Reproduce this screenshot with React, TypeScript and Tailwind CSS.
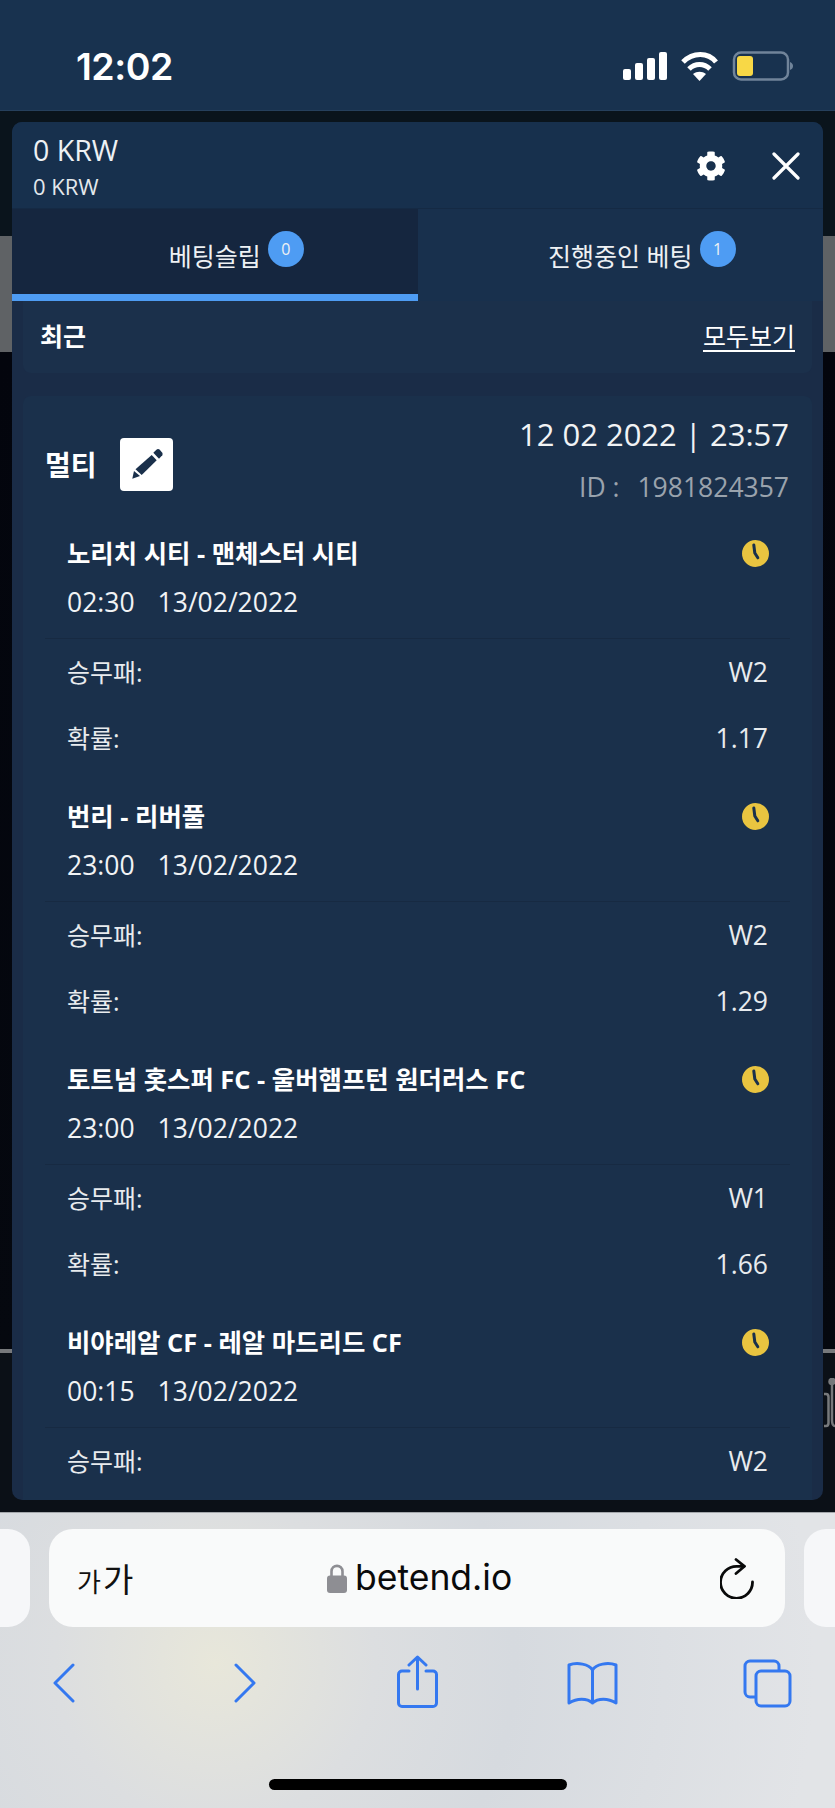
const bets = [
  { teams: "노리치 시티 - 맨체스터 시티", time: "02:30", pick: "W2", odds: "1.17" },
  { teams: "번리 - 리버풀", time: "23:00", pick: "W2", odds: "1.29" },
  { teams: "토트넘 홋스퍼 FC - 울버햄프턴 원더러스 FC", time: "23:00", pick: "W1", odds: "1.66" },
  { teams: "비야레알 CF - 레알 마드리드 CF", time: "00:15", pick: "W2", odds: "" },
];

function StatusBar() {
  return (
    <div className="flex h-[111px] items-start border-b border-[#26405c] bg-[#18324f] pl-[76px] pt-[52px] text-white">
      <span className="mt-[1px] w-[547px] font-['Inter',sans-serif] text-[37.5px] leading-[27px] font-semibold tracking-[-0.5px]">12:02</span>
      <svg width="170" height="30" viewBox="0 0 170 30" className="-mt-[1px]">
        <g fill="#fff">
          <rect x="0" y="18" width="8" height="11" rx="2" />
          <rect x="12" y="12" width="8" height="17" rx="2" />
          <rect x="24" y="7" width="8" height="22" rx="2" />
          <rect x="36" y="1" width="8" height="28" rx="2" />
        </g>
        <g fill="none" stroke="#fff" strokeWidth="5">
          <path d="M60 11 C70 1 85 1 93 11" />
          <path d="M66 18 C72 12 81 12 87 18" />
        </g>
        <path d="M70 23 C74 20 79 20 83 23 L76.5 30 Z" fill="#fff" />
        <rect x="111" y="1.5" width="54" height="27" rx="7" fill="none" stroke="#70849a" strokeWidth="2.5" />
        <rect x="114" y="5" width="16" height="20" rx="3" fill="#f8d846" />
        <path d="M167 11 C169 12 170 13 170 15 C170 17 169 18 167 19 Z" fill="#70849a" />
      </svg>
    </div>
  );
}

function ClockIcon() {
  return (
    <svg width="27" height="27" viewBox="0 0 27 27" className="-mr-[1px]">
      <circle cx="13.5" cy="13.5" r="13.5" fill="#e9c440" />
      <path d="M11.8 5 L12.8 13 L15.8 17.8" fill="none" stroke="#1a304b" strokeWidth="3" strokeLinecap="round" strokeLinejoin="round" />
    </svg>
  );
}

function BetRow({ teams, time, pick, odds }: (typeof bets)[number]) {
  return (
    <div className="pb-[17px]">
      <div className="flex h-[54px] items-center justify-between pl-[44px] pr-[44px]">
        <span className="text-[25.4px] font-bold text-white">{teams}</span>
        <ClockIcon />
      </div>
      <div className="flex h-[46px] items-center gap-[23px] pl-[44px] text-[26.5px] text-[#f1f3f5]">
        <span>{time}</span>
        <span>13/02/2022</span>
      </div>
      <div className="mx-[22px] mt-[12px] h-px bg-[#172a42]" />
      <div className="flex h-[67px] items-center justify-between pl-[44px] pr-[44px] text-[25px] text-[#e8ebee]">
        <span>승무패:</span>
        <span className="text-[26.5px]">{pick}</span>
      </div>
      {odds && (
        <div className="flex h-[66px] items-center justify-between pl-[44px] pr-[44px] text-[25px] text-[#e8ebee]">
          <span>확률:</span>
          <span className="text-[26.5px]">{odds}</span>
        </div>
      )}
    </div>
  );
}

function TabLabel({ label, count }: { label: string; count: number }) {
  return (
    <span className="relative text-[25px] leading-[40px] text-[#eef1f4]">
      {label}
      <span className="absolute -top-[5px] left-full ml-[7px] flex h-[36px] w-[36px] items-center justify-center rounded-full bg-[#4e9cf3] text-[16px] leading-none">
        {count}
      </span>
    </span>
  );
}

function Panel() {
  return (
    <div className="h-[1378px] overflow-hidden rounded-[10px] bg-[#1a2c47] font-['Open_Sans','Noto_Sans_CJK_KR',sans-serif] text-white">
      {/* header */}
      <div className="flex h-[87px] items-center justify-between border-b border-[#152a44] bg-[#17304d] pl-[21px] pr-[23px]">
        <div className="pt-[3px]">
          <div className="text-[28.5px] leading-[36px] text-[#eef1f4]">0 KRW</div>
          <div className="mt-[3px] text-[22px] leading-[30px] text-[#e4e8ec]">0 KRW</div>
        </div>
        <div className="flex items-center gap-[46px] pt-[1px]">
          <svg width="30" height="30" viewBox="0 0 512 512" fill="#fff">
            <path d="M487.4 315.7l-42.6-24.6c4.3-23.2 4.3-47 0-70.2l42.6-24.6c4.9-2.8 7.1-8.6 5.5-14-11.1-35.6-30-67.8-54.7-94.6-3.8-4.1-10-5.1-14.8-2.3L380.8 110c-17.9-15.4-38.5-27.3-60.8-35.1V25.8c0-5.6-3.9-10.5-9.4-11.7-36.7-8.2-74.3-7.8-109.2 0-5.5 1.2-9.4 6.1-9.4 11.7V75c-22.2 7.9-42.8 19.8-60.8 35.1L88.7 85.5c-4.9-2.8-11-1.9-14.8 2.3-24.7 26.7-43.6 58.9-54.7 94.6-1.7 5.4.6 11.2 5.5 14L67.3 221c-4.3 23.2-4.3 47 0 70.2l-42.6 24.6c-4.9 2.8-7.1 8.6-5.5 14 11.1 35.6 30 67.8 54.7 94.6 3.8 4.1 10 5.1 14.8 2.3l42.6-24.6c17.9 15.4 38.5 27.3 60.8 35.1v49.2c0 5.6 3.9 10.5 9.4 11.7 36.7 8.2 74.3 7.8 109.2 0 5.5-1.2 9.4-6.1 9.4-11.7v-49.2c22.2-7.9 42.8-19.8 60.8-35.1l42.6 24.6c4.9 2.8 11 1.9 14.8-2.3 24.7-26.7 43.6-58.9 54.7-94.6 1.5-5.5-.7-11.3-5.6-14.1zM256 336c-44.1 0-80-35.9-80-80s35.9-80 80-80 80 35.9 80 80-35.9 80-80 80z" />
          </svg>
          <svg width="28" height="28" viewBox="0 0 28 28" fill="none" stroke="#fff" strokeWidth="3.2" strokeLinecap="round">
            <path d="M2 2 L26 26 M26 2 L2 26" />
          </svg>
        </div>
      </div>

      {/* tabs */}
      <div className="flex h-[92px]">
        <div className="flex h-full w-1/2 items-start justify-center border-b-[7px] border-[#4e9cf3] bg-[#15263f] pt-[27px]">
          <TabLabel label="베팅슬립" count={0} />
        </div>
        <div className="flex h-full w-1/2 items-start justify-center bg-[#18304d] pt-[27px]">
          <TabLabel label="진행중인 베팅" count={1} />
        </div>
      </div>

      {/* recent */}
      <div className="mx-[11px] flex h-[72px] items-center justify-between rounded-b-[8px] bg-[#1b304b] pl-[17px] pr-[17px] text-[25px]">
        <span className="font-bold">최근</span>
        <span className="underline underline-offset-4">모두보기</span>
      </div>

      {/* bet card */}
      <div className="mx-[11px] mt-[23px] rounded-t-[8px] bg-[#1a304b]">
        <div className="flex h-[130px] items-start justify-between pl-[22px] pr-[23px]">
          <div className="mt-[42px] flex items-center gap-[23px]">
            <span className="mt-[1px] text-[28px] font-bold">멀티</span>
            <span className="flex h-[53px] w-[53px] items-center justify-center rounded-[4px] bg-white">
              <svg width="53" height="53" viewBox="10 12 53 53" fill="#1a304b">
                <path d="M22.3 52.7 L24 45 L30 50 Z" />
                <path d="M25.5 43.3 L41.7 29 L46.7 34.3 L31.7 49 Z" />
                <path d="M43.3 26.7 L47 23.3 Q48.5 22.5 49.5 23.6 L52.3 26.7 Q53 28 52.3 29.3 L49 32.7 Z" />
              </svg>
            </span>
          </div>
          <div className="pt-[18px] text-right">
            <div className="text-[31px] leading-[40px] text-[#f1f3f5]">12 02 2022 | 23:57</div>
            <div className="mt-[13px] flex justify-end gap-[18px] text-[26.5px] leading-[40px] text-[#9aa3ad]">
              <span>ID :</span>
              <span>1981824357</span>
            </div>
          </div>
        </div>
        {bets.map((b) => (
          <BetRow key={b.teams} {...b} />
        ))}
      </div>
    </div>
  );
}

function BrowserChrome() {
  return (
    <div className="h-[296px] border-t border-[#a3a7ab] bg-[radial-gradient(circle_at_215px_150px,#e8e7da_0px,#dcdee0_160px,#d6dadf_300px,#e2e4e7_600px)]">
      <div className="mt-[16px] flex h-[98px] gap-[19px]">
        <div className="w-[30px] rounded-r-[22px] bg-[#f6f7f9]" />
        <div className="flex w-[736px] items-center rounded-[24px] bg-[#f9fafa] pl-[28px] pr-[31px]">
          <span className="flex w-[250px] items-baseline gap-[2px] font-['Noto_Sans_CJK_KR',sans-serif] leading-none text-[#111]">
            <span className="text-[26px]">가</span>
            <span className="text-[33px]">가</span>
          </span>
          <svg width="20" height="29" viewBox="0 0 20 29" className="mt-[1px]">
            <path d="M4.5 13 V7.5 C4.5 0 15.5 0 15.5 7.5 V13" fill="none" stroke="#8e8e93" strokeWidth="2.6" />
            <rect x="0" y="11.5" width="20" height="17.5" rx="3" fill="#8e8e93" />
          </svg>
          <span className="ml-[8px] w-[365px] font-['Inter',sans-serif] text-[35.5px] text-[#0a0a0a]">betend.io</span>
          <svg width="34" height="41" viewBox="0 0 34 41" fill="none" stroke="#0a0a0a" strokeWidth="2.8" strokeLinecap="round" strokeLinejoin="round">
            <path d="M24 8.3 H17 A16 16 0 1 0 32.5 24" />
            <path d="M16 1.5 L24.5 8.3 L16 15.5" />
          </svg>
        </div>
        <div className="w-[31px] rounded-l-[22px] bg-[#f6f7f9]" />
      </div>

      <div className="mt-[28px] flex h-[53px] items-center pl-[53px]">
        <svg width="22" height="40" viewBox="0 0 22 40" fill="none" stroke="#3478f0" strokeWidth="3" strokeLinecap="round" strokeLinejoin="round" className="mt-[3px]">
          <path d="M20 2 L2 20 L20 38" />
        </svg>
        <svg width="22" height="40" viewBox="0 0 22 40" fill="none" stroke="#3478f0" strokeWidth="3" strokeLinecap="round" strokeLinejoin="round" className="ml-[159px] mt-[3px]">
          <path d="M2 2 L20 20 L2 38" />
        </svg>
        <svg width="41" height="53" viewBox="0 0 41 53" fill="none" stroke="#3478f0" strokeWidth="3" strokeLinecap="round" strokeLinejoin="round" className="ml-[141px]">
          <path d="M12 16 H5 A3.5 3.5 0 0 0 1.5 19.5 V48 A3.5 3.5 0 0 0 5 51.5 H36 A3.5 3.5 0 0 0 39.5 48 V19.5 A3.5 3.5 0 0 0 36 16 H29" />
          <path d="M20.5 34 V2 M12 10 L20.5 2 L29 10" />
        </svg>
        <svg width="51" height="43" viewBox="0 0 51 43" fill="none" stroke="#3478f0" strokeWidth="3" strokeLinecap="round" strokeLinejoin="round" className="ml-[129px] mt-[3px]">
          <path d="M25.5 8 C22 2 10 0 2 3 V41 C10 36 20 36 25.5 41 C31 36 41 36 49 41 V3 C41 0 29 2 25.5 8 Z M25.5 8 V41" />
        </svg>
        <svg width="49" height="49" viewBox="0 0 49 49" fill="none" stroke="#3478f0" strokeWidth="3" strokeLinejoin="round" className="ml-[125px] mt-[3px]">
          <path d="M13 38 H7 A5 5 0 0 1 2 33 V7 A5 5 0 0 1 7 2 H31 A5 5 0 0 1 36 7 V12" />
          <rect x="13" y="12" width="34" height="35" rx="5" />
        </svg>
      </div>

      <div className="mx-auto mt-[71px] h-[11px] w-[298px] rounded-full bg-black" />
    </div>
  );
}

export default function App() {
  return (
    <div className="flex h-[1808px] w-[835px] flex-col overflow-hidden">
      <StatusBar />
      <div className="relative h-[1401px] bg-[linear-gradient(to_bottom,#0a141c_0px,#0a141c_125px,#5f6265_125px,#5f6265_241px,#03050d_241px,#05080f_1238px,#77797c_1238px,#77797c_1242px,#0b1017_1242px)] px-[12px] pt-[11px]">
        <Panel />
        {/* bit of the page showing beside the panel */}
        <svg width="11" height="50" viewBox="0 0 11 50" fill="none" stroke="#77797c" strokeWidth="2.5" className="absolute left-[824px] top-[1267px]">
          <circle cx="8" cy="3.5" r="2.5" fill="#77797c" />
          <path d="M8 5 V26" />
          <path d="M0 16 H2 Q4.5 16 4.5 19 V45 Q4.5 48 2 48 H0" />
          <path d="M8 26 V42 Q8 48 11 48" />
        </svg>
      </div>
      <BrowserChrome />
    </div>
  );
}
